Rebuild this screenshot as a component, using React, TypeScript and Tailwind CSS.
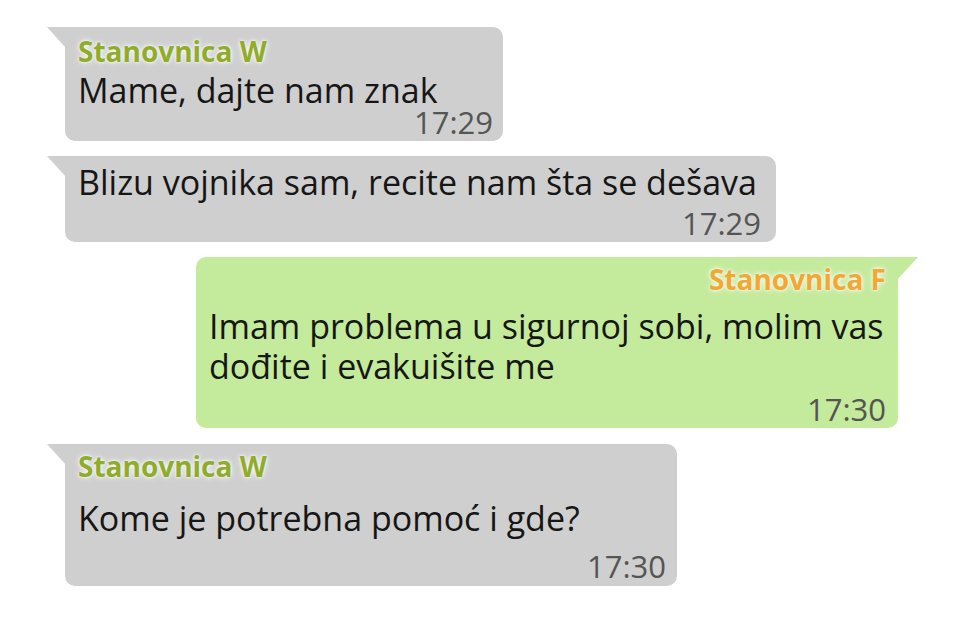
import React from "react";

const LeftTail = ({ color }: { color: string }) => (
  <svg className="absolute top-0 left-[-18px]" width="19" height="21" viewBox="0 0 19 21">
    <polygon points="0,0 19,0 19,21" fill={color} />
  </svg>
);

const RightTail = ({ color }: { color: string }) => (
  <svg className="absolute top-0 right-[-20px]" width="21" height="23" viewBox="0 0 21 23">
    <polygon points="0,0 21,0 0,23" fill={color} />
  </svg>
);

const nameGlow = { textShadow: "0 0 3px #fff, 0 0 6px rgba(255,255,255,0.9)" };

export default function App() {
  return (
    <div
      className="w-[965px] h-[641px] bg-white pt-[27px] flex flex-col"
      style={{ fontFamily: "'Open Sans', 'Noto Sans', sans-serif" }}
    >
      {/* Bubble 1 */}
      <div className="relative ml-[65px] w-[438px] bg-[#cfcfcf] rounded-[10px] rounded-tl-none pl-[13px] pr-[10px] pt-[9px] pb-[4px]">
        <LeftTail color="#cfcfcf" />
        <div className="text-[28px] leading-[30px] font-bold text-[#8fac2b]" style={nameGlow}>
          Stanovnica W
        </div>
        <div className="mt-[4px] text-[34px] leading-[40px] text-[#161616] whitespace-nowrap">
          Mame, dajte nam znak
        </div>
        <div className="mt-[-3px] text-[31px] leading-[30px] text-[#555555] text-right">17:29</div>
      </div>

      {/* Bubble 2 */}
      <div className="relative mt-[15px] ml-[65px] w-[711px] bg-[#cfcfcf] rounded-[10px] rounded-tl-none pl-[13px] pr-[15px] pt-[6px] pb-[4px]">
        <LeftTail color="#cfcfcf" />
        <div className="text-[34px] leading-[40px] text-[#161616] whitespace-nowrap">
          Blizu vojnika sam, recite nam šta se dešava
        </div>
        <div className="mt-[6px] text-[31px] leading-[30px] text-[#555555] text-right">17:29</div>
      </div>

      {/* Bubble 3 */}
      <div className="relative mt-[15px] ml-[196px] w-[702px] bg-[#c4ea9c] rounded-[10px] rounded-tr-none pl-[13px] pr-[12px] pt-[7px] pb-[4px]">
        <RightTail color="#c4ea9c" />
        <div className="text-[28px] leading-[30px] font-bold text-[#f2a833] text-right" style={nameGlow}>
          Stanovnica F
        </div>
        <div className="mt-[12px] text-[34px] leading-[40px] text-[#161616] whitespace-nowrap">
          <div>Imam problema u sigurnoj sobi, molim vas</div>
          <div>dođite i evakuišite me</div>
        </div>
        <div className="mt-[8px] text-[31px] leading-[30px] text-[#555555] text-right">17:30</div>
      </div>

      {/* Bubble 4 */}
      <div className="relative mt-[16px] ml-[65px] w-[612px] bg-[#cfcfcf] rounded-[10px] rounded-tl-none pl-[13px] pr-[11px] pt-[7px] pb-[5px]">
        <LeftTail color="#cfcfcf" />
        <div className="text-[28px] leading-[30px] font-bold text-[#8fac2b]" style={nameGlow}>
          Stanovnica W
        </div>
        <div className="mt-[17px] text-[34px] leading-[40px] text-[#161616] whitespace-nowrap">
          Kome je potrebna pomoć i gde?
        </div>
        <div className="mt-[13px] text-[31px] leading-[30px] text-[#555555] text-right">17:30</div>
      </div>
    </div>
  );
}
